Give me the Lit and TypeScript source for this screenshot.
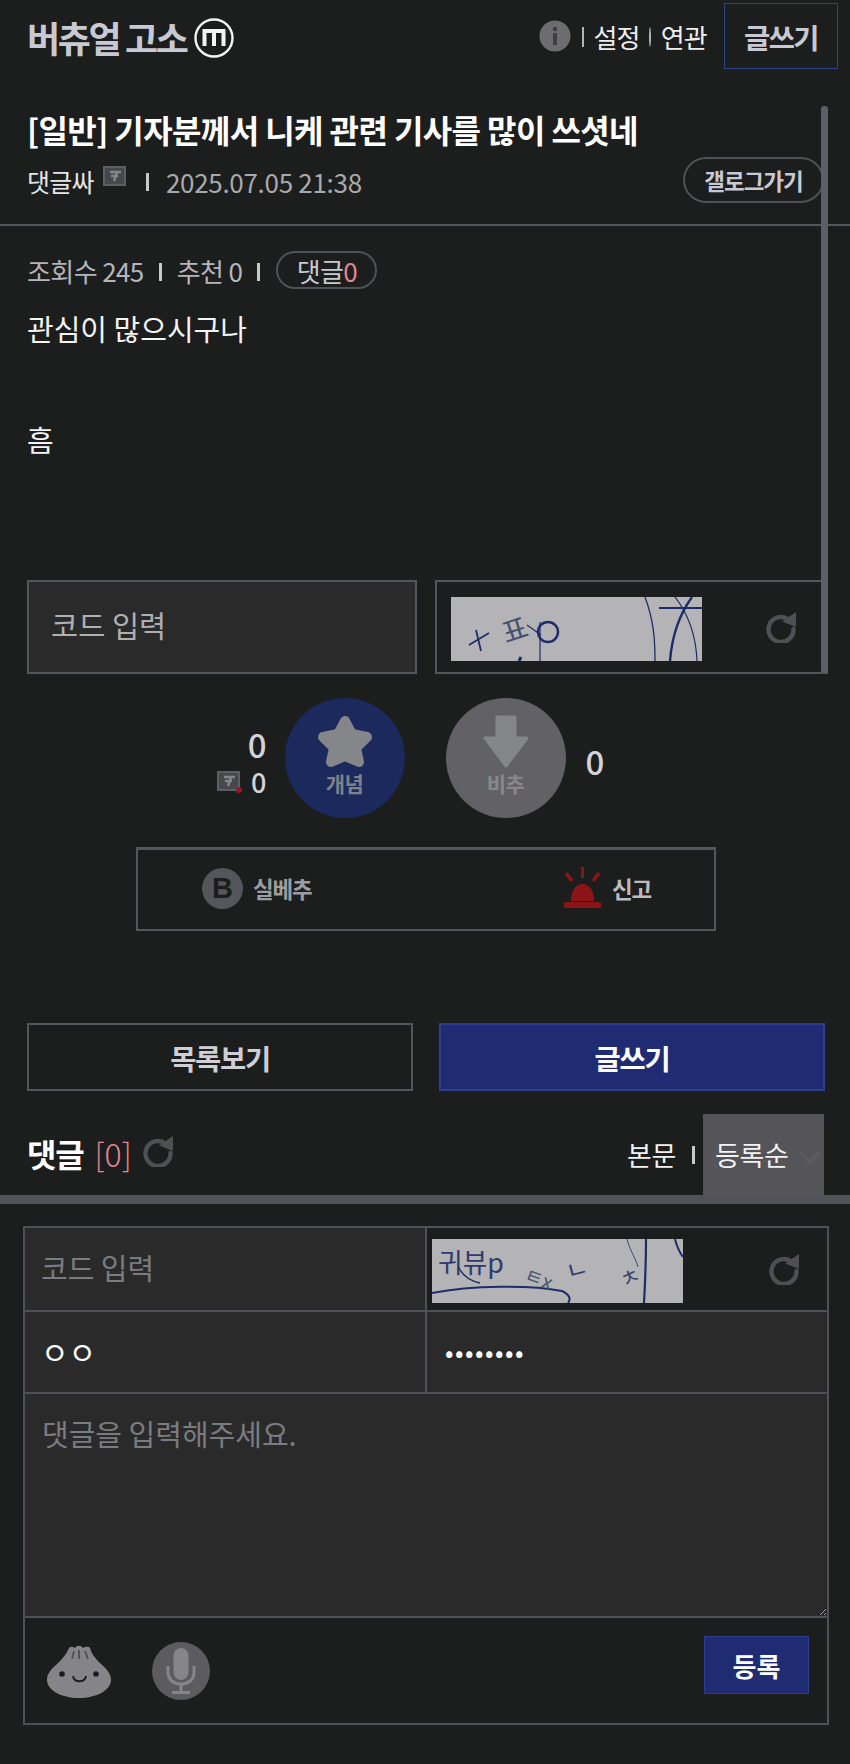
import { LitElement, html, css, svg } from "lit";
import { customElement } from "lit/decorators.js";

const refresh = (size: number) => html`<svg class="refresh" width=${size} height=${size} viewBox="0 0 32 32" fill="none">
  <path d="M23.500 8.500A12.500 12.500 0 1 0 28.500 18" stroke="#4f4f54" stroke-width="4.400" stroke-linecap="round"/>
  <path d="M17 10.500 31 1v15z" fill="#4f4f54"/>
</svg>`;

const badge = (dot = false) => html`<svg class="badge" width="25" height="22" viewBox="0 0 25 22">
  <rect x="0" y="0" width="23" height="20" fill="#5d5e61"/>
  <rect x="2" y="2" width="19" height="16" fill="#47484b"/>
  <path d="M7 6h11M14 6l-3 9M8 10h7" stroke="#85868a" stroke-width="2.400" fill="none"/>
  ${dot ? svg`<circle cx="22" cy="19" r="3" fill="#8e1c22"/>` : ""}
</svg>`;

@customElement("app-root")
export class AppRoot extends LitElement {
  static styles = css`
    :host {
      display: block;
      width: 850px;
      height: 1764px;
      background: #1c1d1d;
      position: relative;
      overflow: hidden;
      font-family: "Noto Sans CJK KR", "Noto Sans", sans-serif;
      color: #fff;
    }
    * { box-sizing: border-box; }
    .header { height: 74px; display: flex; align-items: flex-start; padding: 4px 12px 0 27px; }
    .logo { display: flex; align-items: center; gap: 8px; height: 66px; font-size: 36px; font-weight: 700; color: #c9c9d3; letter-spacing: -2.400px; }
    .logo svg { margin-top: 1px; }
    .nav { margin-left: auto; display: flex; align-items: center; height: 66px; font-size: 26px; color: #eee; letter-spacing: -0.800px; margin-top: -1px; }
    .nav .sep { width: 2px; height: 20px; background: #b4b4b8; margin: 2px 10px 0 11px; }
    .nav .sep.b { margin: 2px 10px 0 9px; }
    .write { margin-left: 17px; width: 114px; height: 66px; border: 1px solid #2d4489; display: flex; align-items: center; justify-content: center; font-size: 28.500px; font-weight: 700; color: #c9c9d3; letter-spacing: -1.500px; }
    .post-head { height: 150px; padding: 33px 26px 0 27px; }
    .title { font-size: 32px; font-weight: 700; line-height: 44px; letter-spacing: -0.600px; white-space: nowrap; }
    .meta { margin-top: 7px; height: 46px; display: flex; align-items: center; font-size: 25px; color: #e6e6e6; letter-spacing: -0.700px; }
    .meta .badge { margin: 0 0 8px 9px; }
    .vsep { width: 3px; height: 18px; background: #c9c9cc; }
    .meta .vsep { margin: 2px 17px 0 18px; }
    .date { color: #a8a9ad; font-size: 26px; letter-spacing: -0.300px; }
    .pill { margin-left: auto; margin-bottom: 2px; width: 141px; height: 46px; border: 2px solid #505156; border-radius: 23px; display: flex; align-items: center; justify-content: center; font-size: 22.500px; font-weight: 700; color: #c9c9d3; letter-spacing: -1px; }
    .divider { height: 2px; background: #55565b; }
    .stats { margin: 25px 0 0 27px; height: 38px; display: flex; align-items: center; font-size: 26px; color: #b4b5ba; letter-spacing: -0.600px; }
    .stats .vsep { margin: 3px 15px 0 15px; }
    .stats .vsep + span + .vsep { margin: 3px 15px 0 15px; }
    .reply-pill { width: 101px; height: 38px; border: 2px solid #505156; border-radius: 19px; display: flex; align-items: center; justify-content: center; color: #c9c9d0; margin-left: 1px; }
    .pink { color: #e08592; }
    .body { margin: 12px 0 0 27px; height: 279px; font-size: 29px; line-height: 55.700px; color: #f4f4f4; }
    .code-row { display: grid; grid-template-columns: 390px 393px; gap: 18px; margin-left: 27px; height: 94px; }
    .code-in { width: 100%; height: 100%; border: 2px solid #55565b; background: #2a2a2b; padding: 0 22px 6px; font: inherit; font-size: 29.500px; color: #eee; outline: none; }
    .code-in::placeholder { color: #b0b0b2; opacity: 1; }
    .cap-box { border: 2px solid #55565b; display: flex; align-items: center; padding: 3px 0 0 14px; }
    .captcha { display: block; flex: none; }
    .cap-box .refresh { margin: 0 0 3px 63px; }
    .vote { margin-top: 24px; display: grid; grid-template-columns: 1fr 120px 120px 1fr; column-gap: 41px; height: 120px; }
    .counts { display: flex; flex-direction: column; align-items: flex-end; margin-right: -23px; }
    .count { font-size: 33px; font-weight: 500; line-height: 38px; color: #d3d3d8; }
    .count.top { margin-top: 27px; }
    .count-sub { display: flex; align-items: center; gap: 9px; font-size: 27px; font-weight: 500; line-height: 38px; color: #d3d3d8; }
    .right-count { margin: 44px 0 0 -21px; }
    .circle { width: 120px; height: 120px; border-radius: 50%; display: flex; flex-direction: column; align-items: center; font-size: 21px; font-weight: 700; line-height: 30px; color: #7f8187; letter-spacing: -0.500px; }
    .circle svg { margin-top: 17px; display: block; }
    .circle.up { background: #1b295d; }
    .circle.down { background: #626266; color: #88888c; }
    .report { margin: 29px 0 0 136px; width: 580px; height: 84px; border: 2px solid #55565b; border-top-width: 3px; display: flex; align-items: center; justify-content: space-between; padding: 0 63px 3px 64px; font-size: 22.500px; font-weight: 700; color: #9c9da2; letter-spacing: -1.200px; }
    .rep { display: flex; align-items: center; gap: 10px; }
    .b { width: 41px; height: 41px; border-radius: 50%; background: #55565b; color: #1c1d1d; display: flex; align-items: center; justify-content: center; font-family: "Liberation Sans", sans-serif; font-size: 29px; font-weight: 700; letter-spacing: 0; }
    .alarm-text { color: #bcbcc0; }
    .btns { margin: 92px 0 0 27px; display: grid; grid-template-columns: 386px 386px; gap: 26px; height: 68px; }
    .btn { border: 2px solid #55565b; display: flex; align-items: center; justify-content: center; font-size: 28.500px; font-weight: 700; color: #cfcfd5; letter-spacing: -1.300px; }
    .btn.blue { background: #1f2c73; border-color: #2d3d8c; color: #fff; }
    .c-head { margin-top: 22px; height: 82px; padding: 0 26px 0 27px; display: flex; align-items: center; }
    .c-title { font-size: 32px; font-weight: 700; letter-spacing: -1.200px; margin-top: -3px; }
    .c-num { margin-left: 11px; font-size: 32px; font-weight: 300; color: #e58591; margin-top: -3px; }
    .c-head .refresh { margin: 0 0 6px 10px; }
    .c-sort { margin-left: auto; display: flex; align-items: center; font-size: 27px; color: #f2f2f2; letter-spacing: -0.300px; height: 100%; }
    .c-sort .vsep { height: 18px; margin: 2px 8px 0 16px; }
    .select { position: relative; width: 121px; height: 81px; background: #545459; display: flex; align-items: center; padding: 0 0 0 12px; }
    .chev { position: absolute; right: 2px; top: 36px; }
    .thick { height: 9px; background: #52535a; }
    .form { margin: 22px 0 0 23px; width: 806px; border: 2px solid #4f5055; }
    .f-grid { display: grid; grid-template-columns: 400px 1fr; }
    .f-cell { height: 84px; border-bottom: 2px solid #4f5055; background: #2a2a2b; }
    .f-cell.r { border-left: 2px solid #4f5055; }
    .f-cell.row2 { height: 82px; }
    .f-cell.cap { background: #1c1d1d; display: flex; align-items: center; padding: 3px 0 0 5px; }
    .f-cell.cap .refresh { margin: 0 0 4px 85px; }
    .f-in { width: 100%; height: 100%; background: transparent; border: 0; outline: none; font: inherit; font-size: 29px; color: #fff; padding: 0 16px 5px; }
    .f-in::placeholder { color: #7b7c80; opacity: 1; }
    .f-in.name { font-size: 30px; padding: 0 16px 2px; }
    .f-in.pw { padding: 0 18px 3px; font-size: 25px; letter-spacing: 1.500px; }
    textarea { display: block; width: 100%; height: 224px; background: #2a2a2b; border: 0; border-bottom: 2px solid #4f5055; outline: none; color: #fff; font: inherit; font-size: 29px; line-height: 40px; padding: 19px 17px; resize: vertical; }
    textarea::placeholder { color: #7b7c80; opacity: 1; }
    .tools { height: 105px; display: flex; align-items: flex-start; padding: 18px 18px 0 22px; }
    .tools .dump { margin-top: 9px; }
    .mic { margin: 6px 0 0 41px; width: 58px; height: 58px; border-radius: 50%; background: #5c5c60; display: flex; align-items: center; justify-content: center; }
    .submit { margin-left: auto; width: 105px; height: 58px; background: #1f2c73; border: 1px solid #2d3d8c; display: flex; align-items: center; justify-content: center; font-size: 26px; font-weight: 700; }
    .scroll { position: absolute; left: 821px; top: 106px; width: 7px; height: 567px; background: #5e5f65; border-radius: 3px; }
    svg text { font-family: "Noto Sans CJK KR", sans-serif; }
  `;

  render() {
    const stroke = "#1f2c6a";
    return html`
      <div class="header">
        <div class="logo">버츄얼 고소
          <svg width="40" height="40" viewBox="0 0 40 40" fill="none" stroke="#f4f4f4">
            <circle cx="20" cy="20" r="18.500" stroke-width="2.400"/>
            <path d="M10.500 28V13h19v15M20 13v15" stroke-width="4"/>
          </svg>
        </div>
        <div class="nav">
          <svg width="32" height="32" viewBox="0 0 32 32">
            <circle cx="16" cy="16" r="15.500" fill="#6d6d70"/>
            <circle cx="16" cy="9" r="2.200" fill="#3f3f42"/><rect x="14" y="13" width="4" height="12" fill="#3f3f42"/>
          </svg>
          <span class="sep"></span><span>설정</span><span class="sep b"></span><span>연관</span>
          <div class="write">글쓰기</div>
        </div>
      </div>

      <div class="post-head">
        <div class="title">[일반] 기자분께서 니케 관련 기사를 많이 쓰셧네</div>
        <div class="meta">
          <span>댓글싸</span>${badge()}
          <span class="vsep"></span>
          <span class="date">2025.07.05 21:38</span>
          <div class="pill">갤로그가기</div>
        </div>
      </div>
      <div class="divider"></div>

      <div class="stats">
        <span>조회수 245</span><span class="vsep"></span><span>추천 0</span><span class="vsep"></span>
        <span class="reply-pill"><span>댓글</span><span class="pink">0</span></span>
      </div>
      <div class="body">관심이 많으시구나<br /><br />흠</div>

      <div class="code-row">
        <input class="code-in" placeholder="코드 입력" />
        <div class="cap-box">
          <svg class="captcha" width="251" height="64" viewBox="0 0 251 64">
            <rect width="251" height="64" fill="#b4b4b6"/>
            <g fill="none" stroke=${stroke}>
              <path d="M18 48 38 36M25 33 30 54" stroke-width="1.800"/>
              <path d="M76 28 90 38M89 25V64" stroke-width="1.200"/>
              <circle cx="97" cy="35" r="10" stroke-width="2.400"/>
              <path d="M70 60 68 64" stroke-width="3"/>
              <path d="M194 0C203 24 204 44 204 64" stroke-width="1.300"/>
              <path d="M219 64C221 38 228 18 241 0" stroke-width="2.400"/>
              <path d="M208 11H251" stroke-width="2.200"/>
              <path d="M224 0C238 18 245 40 246 64" stroke-width="1.200"/>
            </g>
            <text x="50" y="43" font-size="28" fill="#45506f" transform="rotate(-18 64 30)">표</text>
          </svg>
          ${refresh(32)}
        </div>
      </div>

      <div class="vote">
        <div class="counts">
          <div class="count top">0</div>
          <div class="count-sub">${badge(true)}<span>0</span></div>
        </div>
        <div class="circle up">
          <svg width="56" height="53" viewBox="0 0 56 53">
            <path d="M28 6 35 19 50 22 39 33 42 47 28 41 14 47 17 33 6 22 21 19Z" fill="#85868a" stroke="#85868a" stroke-width="10" stroke-linejoin="round"/>
          </svg>
          <span>개념</span>
        </div>
        <div class="circle down">
          <svg width="48" height="53" viewBox="0 0 48 53">
            <path d="M15 2h18v21h12L24 51 3 23h12Z" fill="#85868a" stroke="#85868a" stroke-width="3" stroke-linejoin="round"/>
          </svg>
          <span>비추</span>
        </div>
        <div class="count right-count">0</div>
      </div>

      <div class="report">
        <div class="rep"><span class="b">B</span><span>실베추</span></div>
        <div class="rep">
          <svg width="39" height="42" viewBox="0 0 39 42" fill="#8a1416">
            <path d="M8 32a11.500 15 0 0 1 23 0v2H8Z"/>
            <rect x="0.500" y="35" width="38" height="6" rx="3"/>
            <path d="M18 0h3v11h-3zM1.500 7l3-2 6 8-3 2zM37.500 7l-3-2-6 8 3 2z"/>
          </svg>
          <span class="alarm-text">신고</span>
        </div>
      </div>

      <div class="btns">
        <div class="btn">목록보기</div>
        <div class="btn blue">글쓰기</div>
      </div>

      <div class="c-head">
        <span class="c-title">댓글</span>
        <span class="c-num">[0]</span>
        ${refresh(32)}
        <div class="c-sort">
          <span>본문</span><span class="vsep"></span>
          <div class="select"><span>등록순</span>
            <svg class="chev" width="24" height="14" viewBox="0 0 24 14" fill="none"><path d="M2 2 12 12 22 2" stroke="#5c5c61" stroke-width="3"/></svg>
          </div>
        </div>
      </div>
      <div class="thick"></div>

      <div class="form">
        <div class="f-grid">
          <div class="f-cell"><input class="f-in" placeholder="코드 입력" /></div>
          <div class="f-cell r cap">
            <svg class="captcha" width="251" height="64" viewBox="0 0 251 64">
              <rect width="251" height="64" fill="#b4b4b6"/>
              <g fill="none" stroke=${stroke}>
                <path d="M0 54C40 46 100 46 130 52 138 56 139 60 136 64" stroke-width="2"/>
                <path d="M26 27C30 36 38 42 48 44" stroke-width="1.400"/>
                <path d="M214 0C214 24 213 46 212 64" stroke-width="2.200"/>
                <path d="M243 0C245 8 248 14 251 18" stroke-width="2"/>
                <path d="M195 0C198 12 204 20 206 28" stroke-width=".8"/>
              </g>
              <text x="6" y="34" font-size="27" textLength="66" lengthAdjust="spacingAndGlyphs" fill="#2f3b6e">귀뷰p</text>
              <text x="93" y="46" font-size="20" fill="#4a5272" transform="rotate(20 104 38)">ㅌx</text>
              <text x="134" y="38" font-size="24" fill="#2f3b6e" transform="rotate(-15 148 30)">ㄴ</text>
              <text x="188" y="46" font-size="22" fill="#3d4770" transform="rotate(-25 198 38)">ㅊ</text>
            </svg>
            ${refresh(32)}
          </div>
          <div class="f-cell row2"><input class="f-in name" .value=${"ㅇㅇ"} /></div>
          <div class="f-cell r row2"><input class="f-in pw" type="password" .value=${"12345678"} /></div>
        </div>
        <textarea placeholder="댓글을 입력해주세요."></textarea>
        <div class="tools">
          <svg class="dump" width="64" height="53" viewBox="0 0 64 53">
            <path d="M22 3C24 1 26 2 28 3 30 0 34 0 36 3 38 2 41 1 43 3 45 10 49 14 54 19 60 24 64 29 64 35 64 45 50 53 32 53 14 53 0 45 0 35 0 29 4 24 10 19 15 14 19 10 22 3Z" fill="#858589"/>
            <path d="M27 6 25 14M32 5V14M38 6 41 14" stroke="#4f4f53" stroke-width="1.800" fill="none"/>
            <circle cx="15" cy="29" r="2.800" fill="#1c1d1d"/><circle cx="49" cy="29" r="2.800" fill="#1c1d1d"/>
            <path d="M26 31C27 38 38 38 39 31" stroke="#1c1d1d" stroke-width="1.800" fill="none"/>
          </svg>
          <div class="mic">
            <svg width="30" height="46" viewBox="0 0 30 46" fill="none">
              <rect x="7.500" y="0" width="15" height="32" rx="7.500" fill="#85858a"/>
              <path d="M2 18V24C2 32 8 36 15 36 22 36 28 32 28 24V18" stroke="#85858a" stroke-width="3"/>
              <path d="M15 36V44M6 44.500H24" stroke="#85858a" stroke-width="3"/>
            </svg>
          </div>
          <div class="submit">등록</div>
        </div>
      </div>
      <div class="scroll"></div>
    `;
  }
}
